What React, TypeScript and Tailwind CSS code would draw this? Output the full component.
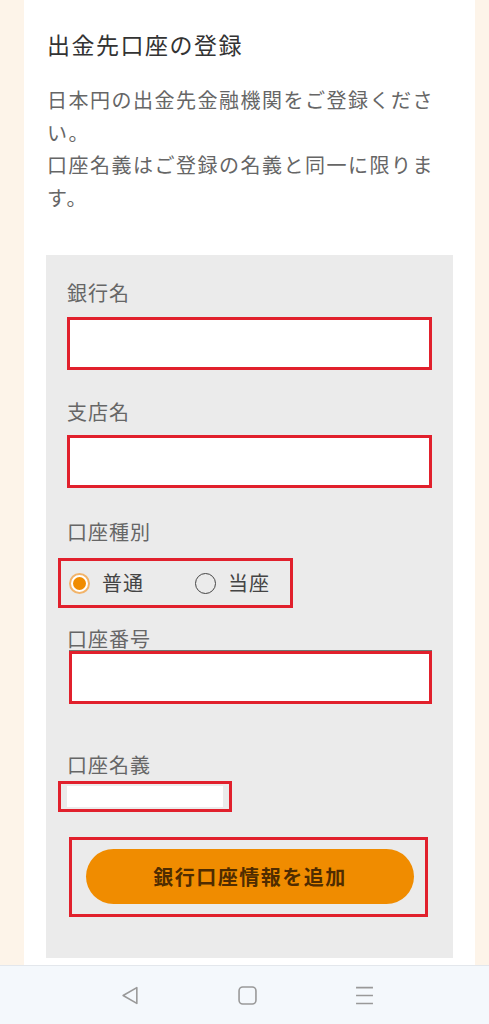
const FONT = { fontFamily: '"Noto Sans CJK JP", "Noto Sans", sans-serif' };

function Label({ children, className = "" }: { children: React.ReactNode; className?: string }) {
  return (
    <p className={`text-[20px] leading-[32px] tracking-[1px] text-[#666] ${className}`}>
      {children}
    </p>
  );
}

function RedInput({ className = "" }: { className?: string }) {
  return (
    <div className={`h-[53px] border-[3px] border-[#e1202c] bg-white ${className}`} />
  );
}

export default function App() {
  return (
    <div className="flex h-[1024px] w-[489px] flex-col overflow-hidden" style={FONT}>
      <div className="flex h-[965px] bg-[#fdf4e9]">
        <div className="ml-[24px] w-[451px] bg-white px-[22px] pt-[28px]">
          <h1 className="pl-[1px] text-[23px] leading-[32px] tracking-[1.5px] text-[#333]">
            出金先口座の登録
          </h1>
          <p className="mt-[24px] pl-[1px] text-[20px] leading-[32.5px] tracking-[1.5px] text-[#666]">
            日本円の出金先金融機関をご登録ください。
            <br />
            口座名義はご登録の名義と同一に限ります。
          </p>

          <div className="mt-[41px] h-[703px] bg-[#ebebeb] px-[21px] pt-[22px]">
            <Label>銀行名</Label>
            <RedInput className="mt-[8px]" />

            <Label className="mt-[26px]">支店名</Label>
            <RedInput className="mt-[7px]" />

            <Label className="mt-[28px]">口座種別</Label>
            <div className="-ml-[9px] mt-[10px] flex h-[50px] w-[235px] items-center border-[3px] border-[#e1202c] pl-[8px]">
              <span className="flex h-[21px] w-[21px] items-center justify-center rounded-full border-[2px] border-[#f2b46a] bg-white">
                <span className="h-[13px] w-[13px] rounded-full bg-[#f08c00]" />
              </span>
              <span className="ml-[12px] text-[20px] tracking-[1px] text-[#444]">普通</span>
              <span className="ml-[51px] h-[21px] w-[21px] rounded-full border-[1.5px] border-[#444]" />
              <span className="ml-[12px] text-[20px] tracking-[1px] text-[#444]">当座</span>
            </div>

            <Label className="mt-[15px]">口座番号</Label>
            <RedInput className="relative -mt-[4px] ml-[2px] shadow-[0_-1px_0_#6e7a72]" />

            <Label className="mt-[45px]">口座名義</Label>
            <div className="-ml-[9px] flex h-[31px] w-[174px] items-center border-[3px] border-[#e1202c] px-[6px]">
              <div className="h-[21px] w-full bg-white" />
            </div>

            <div className="ml-[2px] mt-[25px] flex h-[80px] w-[359px] items-start border-[3px] border-[#e1202c] pl-[14px] pt-[9px]">
              <button className="flex h-[55px] w-[328px] items-center justify-center rounded-full bg-[#f08c00] text-[20px] font-bold tracking-[1.5px] text-[#4f2c00]">
                銀行口座情報を追加
              </button>
            </div>
          </div>
        </div>
      </div>

      <div className="flex h-[59px] items-center border-t border-[#e3e7ec] bg-[#f4f8fc]">
        <div className="relative h-full w-full">
          <svg className="absolute left-[121px] top-[20px]" width="19" height="19" viewBox="0 0 18 18" fill="none" stroke="#999" strokeWidth="1.5" strokeLinejoin="round">
            <path d="M2 9 L15 1.5 L15 16.5 Z" />
          </svg>
          <svg className="absolute left-[238px] top-[20px]" width="19" height="19" viewBox="0 0 18 18" fill="none" stroke="#999" strokeWidth="1.5">
            <rect x="1" y="1" width="16" height="16" rx="3.5" />
          </svg>
          <svg className="absolute left-[355px] top-[20px]" width="19" height="19" viewBox="0 0 18 18" fill="none" stroke="#999" strokeWidth="1.5">
            <path d="M1 1.5 H17 M1 9 H17 M1 16.5 H17" />
          </svg>
        </div>
      </div>
    </div>
  );
}
